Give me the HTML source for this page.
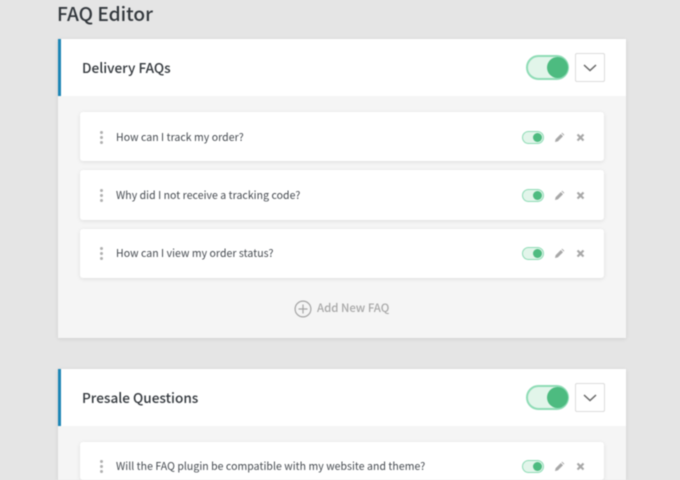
<!DOCTYPE html>
<html><head><meta charset="utf-8">
<style>
html,body{margin:0;padding:0;width:680px;height:480px;overflow:hidden;background:#e5e5e5}
body{position:relative;font-family:"Liberation Sans","Noto Sans CJK SC",sans-serif;}
#w{position:absolute;left:0;top:0;width:680px;height:480px;overflow:hidden;filter:blur(.4px)}
h1{position:absolute;left:57px;top:-1px;margin:0;font:500 19.100px/28px "Noto Sans CJK SC","Liberation Sans",sans-serif;color:#32373c}
.card{position:absolute;left:58px;width:568px;background:#f5f5f5;box-shadow:0 1px 4px rgba(0,0,0,.1)}
.head{position:absolute;left:0;top:0;width:565px;height:57px;background:#fff;border-left:3px solid #1c85b5}
.head b{position:absolute;left:21px;top:16px;font:500 13.600px/24px "Noto Sans CJK SC","Liberation Sans",sans-serif;color:#32373c}
.tg{position:absolute;left:465px;top:16px;width:39px;height:21px;border:2px solid #8fdcb6;border-radius:13px;background:#e2f5ea}
.tg i{position:absolute;left:19px;top:0;width:21px;height:21px;border-radius:50%;background:#4dbb80}
.dd{position:absolute;left:514px;top:14px;width:28px;height:27px;border:1px solid #dcdcdc;border-radius:2px;background:#fff}
.dd svg{position:absolute;left:0;top:0}
.row{position:absolute;left:22px;width:524px;height:50px;background:#fff;border-radius:3px;box-shadow:0 1px 4px rgba(0,0,0,.1)}
.row span{position:absolute;left:36px;top:15px;font:400 10.500px/20px "Noto Sans CJK SC","Liberation Sans",sans-serif;color:#44494f;letter-spacing:.05px;white-space:nowrap}
.a>*{margin-top:1px}
.dots{position:absolute;left:19.500px;top:18px;width:3px;height:3px;border-radius:50%;background:#b0b0b0;box-shadow:0 5px 0 #b0b0b0,0 10px 0 #b0b0b0}
.s{position:absolute;left:442px;top:18px;width:20px;height:11px;border:1px solid #8fdcb6;border-radius:7px;background:#e2f5ea}
.s i{position:absolute;left:10px;top:1px;width:9px;height:9px;border-radius:50%;background:#4dbb80}
.ic{position:absolute;top:19px}
.add{position:absolute;top:259px;font:500 11.400px/20px "Noto Sans CJK SC","Liberation Sans",sans-serif;color:#a8a8a8;white-space:nowrap}
</style></head><body><div id="w">
<h1>FAQ Editor</h1>

<div class="card" style="top:39px;height:299px">
 <div class="head"><b>Delivery FAQs</b><div class="tg"><i></i></div>
  <div class="dd"><svg width="28" height="27" viewBox="0 0 28 27"><path d="M8 11l6 5.500 6-5.500" fill="none" stroke="#666" stroke-width="1.500"/></svg></div></div>

 <div class="row a" style="top:73px;height:49px"><div class="dots"></div><span>How can I track my order?</span><div class="s"><i></i></div>
  <svg class="ic" style="left:474px" width="11" height="11" viewBox="0 0 11 11"><path d="M1 10l.6-2.800 5.200-5.200 2.200 2.200-5.200 5.200zM7.500 1.300l.8-.6 2 2-.6.800z" fill="#a8a8a8"/></svg>
  <svg class="ic" style="left:495px" width="11" height="11" viewBox="0 0 11 11"><path d="M2.500 2.500l6 6M8.500 2.500l-6 6" stroke="#a8a8a8" stroke-width="2.200"/></svg></div>

 <div class="row a" style="top:131px"><div class="dots"></div><span>Why did I not receive a tracking code?</span><div class="s"><i></i></div>
  <svg class="ic" style="left:474px" width="11" height="11" viewBox="0 0 11 11"><path d="M1 10l.6-2.800 5.200-5.200 2.200 2.200-5.200 5.200zM7.500 1.300l.8-.6 2 2-.6.800z" fill="#a8a8a8"/></svg>
  <svg class="ic" style="left:495px" width="11" height="11" viewBox="0 0 11 11"><path d="M2.500 2.500l6 6M8.500 2.500l-6 6" stroke="#a8a8a8" stroke-width="2.200"/></svg></div>

 <div class="row" style="top:190px;height:49px"><div class="dots"></div><span>How can I view my order status?</span><div class="s"><i></i></div>
  <svg class="ic" style="left:474px" width="11" height="11" viewBox="0 0 11 11"><path d="M1 10l.6-2.800 5.200-5.200 2.200 2.200-5.200 5.200zM7.500 1.300l.8-.6 2 2-.6.800z" fill="#a8a8a8"/></svg>
  <svg class="ic" style="left:495px" width="11" height="11" viewBox="0 0 11 11"><path d="M2.500 2.500l6 6M8.500 2.500l-6 6" stroke="#a8a8a8" stroke-width="2.200"/></svg></div>

 <svg style="position:absolute;left:236px;top:261px" width="18" height="18" viewBox="0 0 18 18"><circle cx="9" cy="9" r="7.900" fill="none" stroke="#a5a5a5" stroke-width="1.200"/><path d="M9 4.500v9M4.500 9h9" stroke="#a5a5a5" stroke-width="1.200"/></svg>
 <div class="add" style="left:259px">Add New FAQ</div>
</div>

<div class="card" style="top:369px;height:111px">
 <div class="head"><b>Presale Questions</b><div class="tg"><i></i></div>
  <div class="dd"><svg width="28" height="27" viewBox="0 0 28 27"><path d="M8 11l6 5.500 6-5.500" fill="none" stroke="#666" stroke-width="1.500"/></svg></div></div>
 <div class="row" style="top:73px;height:38px"><div class="dots"></div><span>Will the FAQ plugin be compatible with my website and theme?</span><div class="s"><i></i></div>
  <svg class="ic" style="left:474px" width="11" height="11" viewBox="0 0 11 11"><path d="M1 10l.6-2.800 5.200-5.200 2.200 2.200-5.200 5.200zM7.500 1.300l.8-.6 2 2-.6.800z" fill="#a8a8a8"/></svg>
  <svg class="ic" style="left:495px" width="11" height="11" viewBox="0 0 11 11"><path d="M2.500 2.500l6 6M8.500 2.500l-6 6" stroke="#a8a8a8" stroke-width="2.200"/></svg></div>
</div>
</div></body></html>
